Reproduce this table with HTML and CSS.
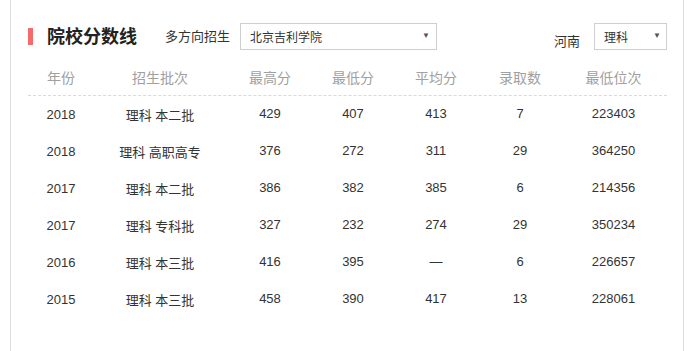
FILE: index.html
```html
<!DOCTYPE html>
<html lang="zh">
<head>
<meta charset="utf-8">
<link rel="stylesheet" href="styles.css">
</head>
<body>
<div class="panel">
  <div class="toolbar">
    <span class="mark"></span>
    <h2 class="title">院校分数线</h2>
    <span class="label">多方向招生</span>
    <div class="select select-school"><span>北京吉利学院</span><span class="arrow">▼</span></div>
    <span class="spacer"></span>
    <span class="label province">河南</span>
    <div class="select select-type"><span>理科</span><span class="arrow">▼</span></div>
  </div>
  <div class="table">
    <div class="row head">
      <span>年份</span><span>招生批次</span><span>最高分</span><span>最低分</span><span>平均分</span><span>录取数</span><span>最低位次</span>
    </div>
    <div class="row"><span>2018</span><span class="cn">理科 本二批</span><span class="num">429</span><span class="num">407</span><span class="num">413</span><span class="num">7</span><span class="num">223403</span></div>
    <div class="row"><span>2018</span><span class="cn">理科 高职高专</span><span class="num">376</span><span class="num">272</span><span class="num">311</span><span class="num">29</span><span class="num">364250</span></div>
    <div class="row"><span>2017</span><span class="cn">理科 本二批</span><span class="num">386</span><span class="num">382</span><span class="num">385</span><span class="num">6</span><span class="num">214356</span></div>
    <div class="row"><span>2017</span><span class="cn">理科 专科批</span><span class="num">327</span><span class="num">232</span><span class="num">274</span><span class="num">29</span><span class="num">350234</span></div>
    <div class="row"><span>2016</span><span class="cn">理科 本三批</span><span class="num">416</span><span class="num">395</span><span class="num">—</span><span class="num">6</span><span class="num">226657</span></div>
    <div class="row"><span>2015</span><span class="cn">理科 本三批</span><span class="num">458</span><span class="num">390</span><span class="num">417</span><span class="num">13</span><span class="num">228061</span></div>
  </div>
</div>
</body>
</html>
```

FILE: styles.css
```css
html, body {
  margin: 0;
  padding: 0;
  background: #fff;
}
body {
  font-family: "Liberation Sans", "Noto Sans CJK SC", sans-serif;
  color: #333;
  font-size: 13px;
}
.panel {
  margin-left: 10px;
  width: 674px;
  height: 351px;
  box-sizing: border-box;
  overflow: hidden;
  border-left: 1px solid #dcdcdc;
  border-right: 1px solid #dcdcdc;
  padding: 23px 16px 0 17px;
}
.toolbar {
  display: flex;
  align-items: center;
  height: 27px;
}
.mark {
  width: 5px;
  height: 17px;
  background: #f76a6a;
}
.title {
  margin: 0 0 0 14px;
  font-size: 18px;
  font-weight: bold;
  color: #222;
  line-height: 20px;
}
.label {
  font-size: 13px;
  color: #333;
  margin-left: 28px;
  margin-right: 10px;
  line-height: 16px;
}
.select {
  display: flex;
  align-items: center;
  justify-content: space-between;
  height: 27px;
  box-sizing: border-box;
  border: 1px solid #cfcfcf;
  font-size: 12px;
  color: #333;
}
.select-school {
  width: 197px;
  padding: 0 6px 0 9px;
}
.select-type {
  width: 73px;
  padding: 0 5px 0 9px;
}
.arrow {
  font-size: 8px;
  color: #555;
  margin-top: -3px;
}
.spacer {
  flex: 1;
}
.province {
  margin: 10px 14px 0 0;
}
.table {
  margin-top: 8px;
}
.row {
  display: grid;
  grid-template-columns: 66px 132px 88px 78px 88px 80px 107px;
  align-items: center;
  height: 37px;
  text-align: center;
  font-size: 13px;
  color: #333;
}
.row.head {
  height: 38px;
  font-size: 14px;
  color: #a0a0a0;
  border-bottom: 1px dashed #dadada;
  box-sizing: border-box;
}
.num {
  margin-top: -3px;
}
```
